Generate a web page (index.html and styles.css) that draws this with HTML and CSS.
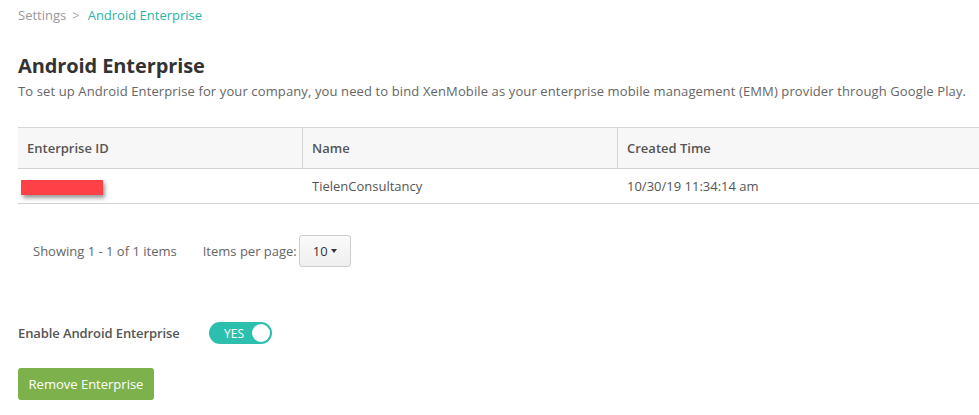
FILE: index.html
```html
<!DOCTYPE html>
<html>
<head>
<meta charset="utf-8">
<link rel="stylesheet" href="styles.css">
</head>
<body>
<div class="page">
  <nav class="crumbs"><span class="crumb">Settings</span><span class="sep">&gt;</span><span class="crumb current">Android Enterprise</span></nav>
  <h1 class="title">Android Enterprise</h1>
  <p class="desc">To set up Android Enterprise for your company, you need to bind XenMobile as your enterprise mobile management (EMM) provider through Google Play.</p>
  <div class="table">
    <div class="row head">
      <div class="cell c1">Enterprise ID</div>
      <div class="cell c2">Name</div>
      <div class="cell c3">Created Time</div>
    </div>
    <div class="row body">
      <div class="cell c1"><span class="redact"></span></div>
      <div class="cell c2">TielenConsultancy</div>
      <div class="cell c3">10/30/19 11:34:14 am</div>
    </div>
  </div>
  <div class="pager">
    <span class="showing">Showing 1 - 1 of 1 items</span>
    <span class="ipp">Items per page:</span>
    <span class="select">10<span class="caret"></span></span>
  </div>
  <div class="enable">
    <span class="label">Enable Android Enterprise</span>
    <span class="toggle"><span class="yes">YES</span><span class="knob"></span></span>
  </div>
  <button class="btn">Remove Enterprise</button>
</div>
</body>
</html>
```
FILE: styles.css
```css
html, body { margin: 0; padding: 0; background: #fff; }
body { font-family: "Open Sans", "Noto Sans", sans-serif; color: #555; overflow: hidden; }
.page { padding: 6px 0 0 18px; width: 1000px; }
.crumbs { font-size: 13px; line-height: 18px; color: #999; display: flex; gap: 0; }
.sep { margin: 0 8px 0 6px; color: #aaa; }
.current { color: #2ab3a6; }
.title { margin: 29px 0 0; font-size: 20px; font-weight: 700; color: #333; line-height: 26px; letter-spacing: -0.1px; }
.desc { margin: 3px 0 0; font-size: 13px; line-height: 18px; color: #666; letter-spacing: 0.12px; white-space: nowrap; }
.table { margin-top: 27px; border-top: 1px solid #d6d6d6; }
.row { display: flex; border-bottom: 1px solid #d2d2d2; }
.row.head { background: #f7f7f7; height: 40px; }
.row.body { height: 34px; }
.cell { display: flex; align-items: center; padding-left: 9px; font-size: 13px; box-sizing: border-box; }
.head .cell { font-weight: 600; color: #555; }
.c1 { width: 284px; }
.c2 { width: 315px; }
.c3 { flex: 1; }
.head .c2, .head .c3 { border-left: 1px solid #d6d6d6; }
.body .c2 { padding-left: 10px; }
.body .c3 { padding-left: 10px; }
.redact { display: block; width: 82px; height: 15px; background: #fe4146; margin-left: -6px; margin-top: 3px; box-shadow: 2px 3px 4px rgba(0,0,0,0.4); }
.pager { display: flex; align-items: center; margin-top: 31px; padding-left: 15px; font-size: 13px; color: #666; }
.ipp { margin-left: 26px; }
.select { margin-left: 2px; width: 52px; height: 32px; box-sizing: border-box; border: 1px solid #ccc; border-radius: 3px; background: linear-gradient(#fafafa, #efefef); display: flex; align-items: center; justify-content: center; color: #333; gap: 3px; }
.caret { width: 0; height: 0; border-left: 3.5px solid transparent; border-right: 3.5px solid transparent; border-top: 4px solid #333; }
.enable { display: flex; align-items: center; margin-top: 55px; }
.label { font-size: 13px; font-weight: 600; color: #555; width: 191px; letter-spacing: -0.1px; }
.toggle { width: 63px; height: 22px; border-radius: 11px; background: #2dbfae; display: flex; align-items: center; justify-content: space-between; box-sizing: border-box; padding: 0 2px 0 15px; }
.yes { color: #fff; font-size: 12px; font-weight: 400; }
.knob { width: 18px; height: 18px; border-radius: 50%; background: #fff; }
.btn { margin-top: 24px; width: 136px; height: 32px; border: 0; border-radius: 3px; background: #7db14c; color: #fff; font-family: "Open Sans", "Noto Sans", sans-serif; font-size: 13px; padding: 0; }
```
